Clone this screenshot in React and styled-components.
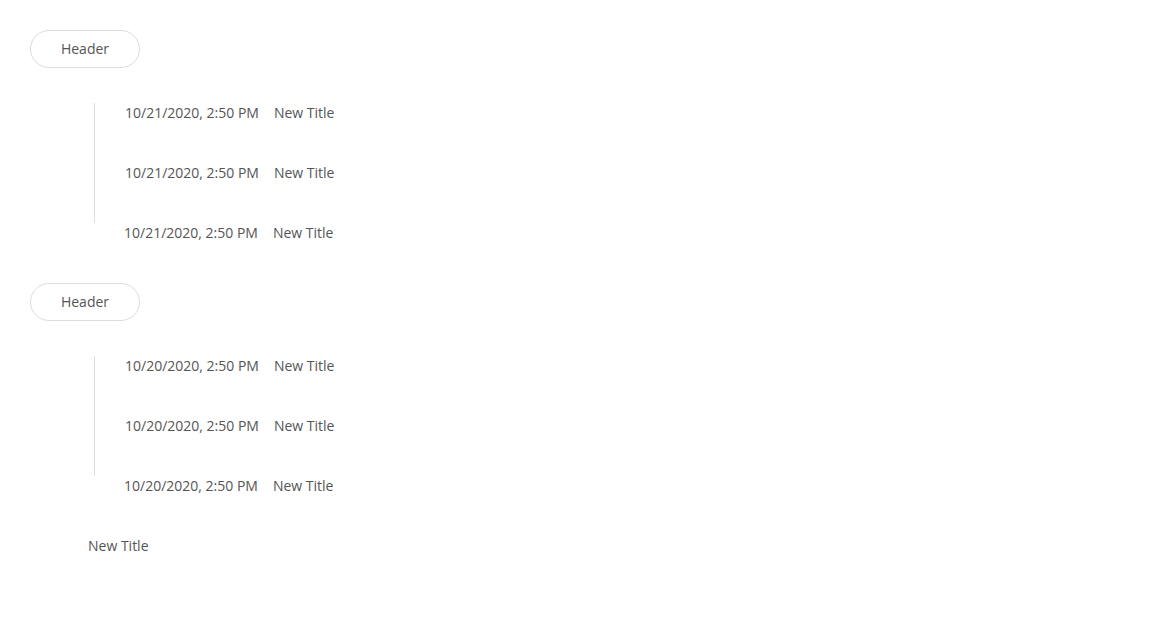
import styled, { createGlobalStyle } from "styled-components"

const GlobalStyle = createGlobalStyle`
    body {
        margin: 0;
        background: #fff;
        font-family: "Open Sans", sans-serif;
        color: #555;
    }
`;

const Container = styled.div`
    padding: 30px 30px 0;
`;

const Group = styled.div`
    display: flex;
    flex-direction: column;
    align-items: flex-start;
`;

const Header = styled.div`
    box-sizing: border-box;
    width: 110px;
    height: 38px;
    padding-bottom: 2px;
    display: flex;
    align-items: center;
    justify-content: center;
    border: 1px solid #ddd;
    border-radius: 19px;
    font-size: 14px;
    color: #555;
`;

const List = styled.div`
    margin: 35px 0 0 64px;
    display: flex;
    flex-direction: column;
`;

const Item = styled.div`
    height: 60px;
    box-sizing: border-box;
    padding: 1px 0 0 30px;
    border-left: ${props => props.last ? 'none' : '1px solid #ddd'};
    display: flex;
    gap: 15px;
    font-size: 14px;
    line-height: 17px;
`;

const Time = styled.span``;
const ItemTitle = styled.span``;

const Footer = styled.div`
    margin-left: 58px;
    padding-top: 1px;
    font-size: 14px;
    line-height: 17px;
`;

const groups = [
    { date: '10/21/2020, 2:50 PM' },
    { date: '10/20/2020, 2:50 PM' },
];

const App = () => {
  return (
    <Container>
        <GlobalStyle />
        {groups.map((g, i) => (
            <Group key={i}>
                <Header>Header</Header>
                <List>
                    {[0, 1, 2].map(n => (
                        <Item key={n} last={n === 2}>
                            <Time>{g.date}</Time>
                            <ItemTitle>New Title</ItemTitle>
                        </Item>
                    ))}
                </List>
            </Group>
        ))}
        <Footer>New Title</Footer>
    </Container>
  )
}

export default App
